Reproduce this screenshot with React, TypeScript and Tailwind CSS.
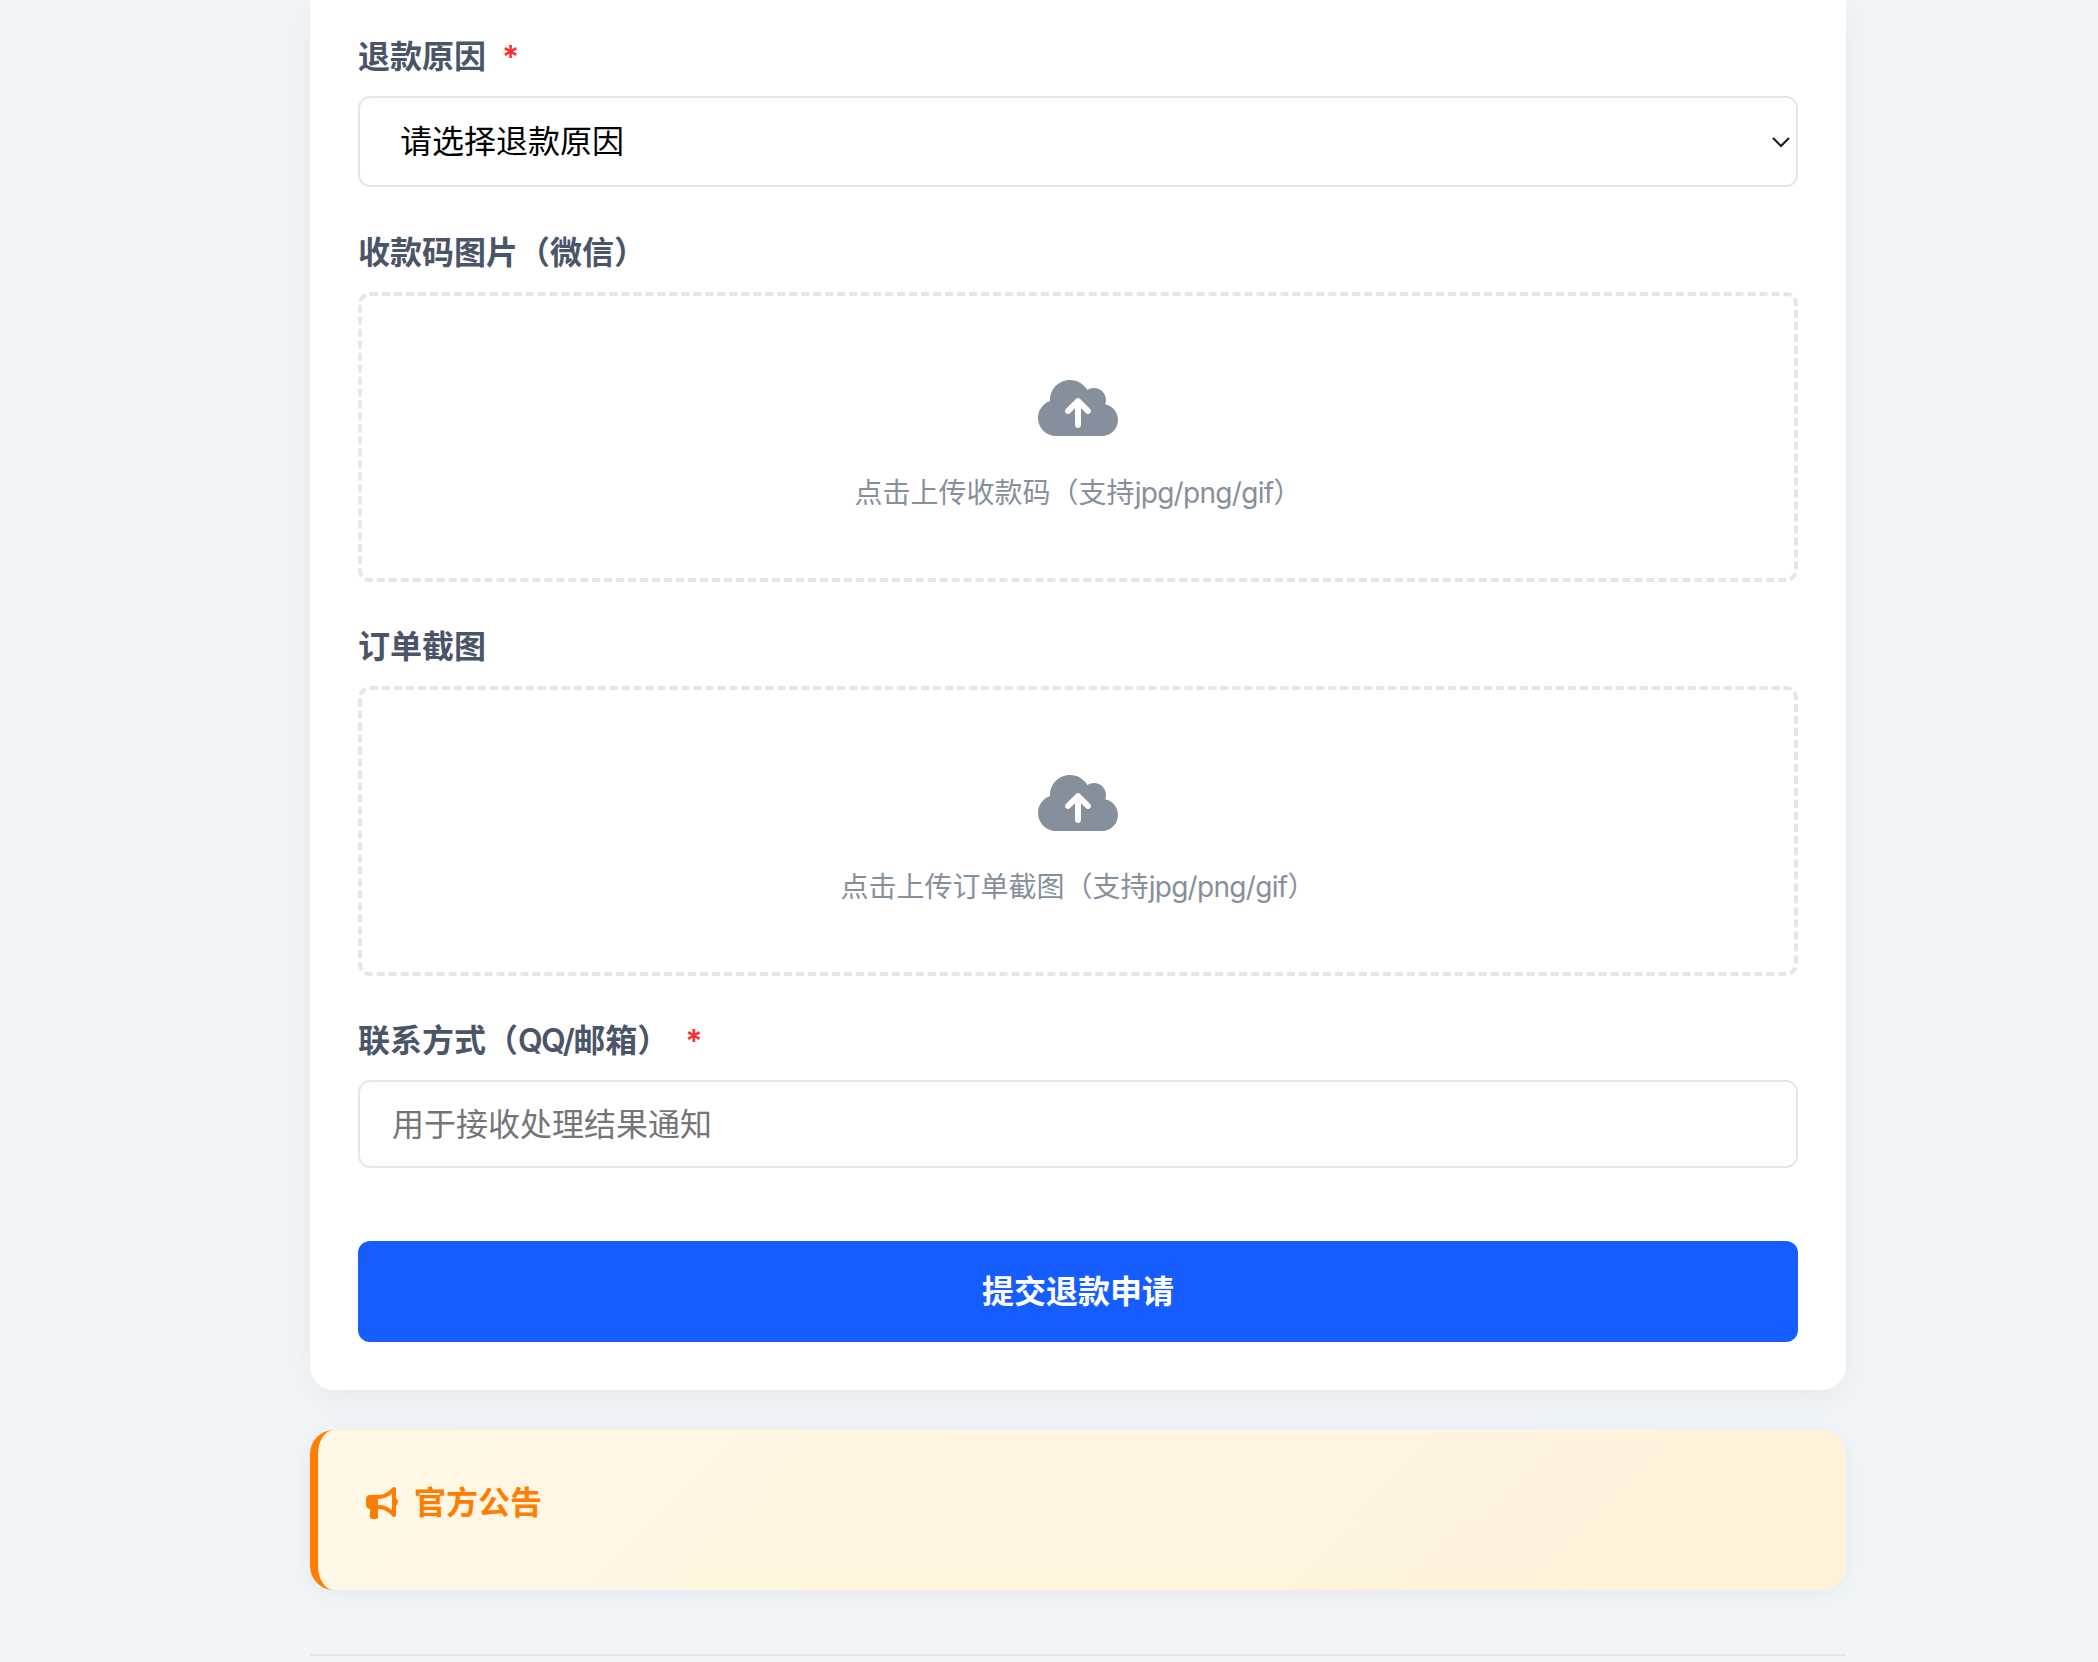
import type { ReactNode } from "react";
import { FaBullhorn, FaCloudArrowUp } from "react-icons/fa6";

const font = "font-['Inter','Noto_Sans_CJK_SC',sans-serif]";

function Label({ children, required, className }: { children: ReactNode; required?: boolean; className?: string }) {
  return (
    <label className={`flex h-[51px] items-center text-[32px] leading-[51px] font-semibold text-[#4a5568] ${className ?? ""}`}>
      <span>{children}</span>
      {required && <span className="ml-[16px] self-start mt-[5px] text-[32px] leading-[44px] font-semibold text-[#ff2d2d]">*</span>}
    </label>
  );
}

function Upload({ text, className }: { text: string; className?: string }) {
  return (
    <div className={`flex h-[290px] cursor-pointer flex-col items-center rounded-xl border-4 border-dashed border-[#e5e6eb] bg-white pt-[80.5px] ${className ?? ""}`}>
      <FaCloudArrowUp className="h-[64px] w-[80px] text-[#86909c]" />
      <p className="mt-[30.5px] text-[28px] leading-[45px] text-[#86909c]">
        {text}（支持<span className="tracking-[-0.7px]">jpg/png/gif</span>）
      </p>
    </div>
  );
}

export default function App() {
  return (
    <div className={`${font} h-[1662px] overflow-hidden bg-[#f2f5f8]`}>
      <div className="ml-[310px] flex w-[1536px] flex-col">
        <div className="rounded-b-3xl bg-white px-[48px] pt-[31px] pb-[48px] shadow-[0_8px_32px_rgba(0,0,0,0.05)]">
          <Label required>退款原因</Label>
          <div className="relative mt-[14px]">
            <select className="h-[91px] w-full appearance-none rounded-xl border-2 border-[#e5e6eb] bg-white pl-[40px] text-[32px] text-black outline-none">
              <option>请选择退款原因</option>
            </select>
            <svg className="pointer-events-none absolute top-[39px] right-[7px] h-[14px] w-[20px]" viewBox="0 0 20 14" fill="none" stroke="#1f1f1f" strokeWidth="2.2">
              <path d="M2 3l8 8 8-8" />
            </svg>
          </div>

          <Label className="mt-[40px]">收款码图片（微信）</Label>
          <Upload text="点击上传收款码" className="mt-[13.5px]" />

          <Label className="mt-[39.5px]">订单截图</Label>
          <Upload text="点击上传订单截图" className="mt-[14px]" />

          <Label required className="mt-[39px]">
            联系方式（<span className="tracking-[-1.7px]">QQ/</span>邮箱）
          </Label>
          <input
            className="mt-[14px] block h-[88px] w-full rounded-xl border-2 border-[#e5e6eb] bg-white px-[32px] text-[32px] outline-none placeholder:text-[#757575]"
            placeholder="用于接收处理结果通知"
          />

          <button className="mt-[73px] flex h-[101px] w-full items-center justify-center rounded-xl bg-[#165dff] text-[32px] font-semibold text-white">
            提交退款申请
          </button>
        </div>

        <div className="mt-[40px] h-[160px] rounded-3xl border-l-8 border-[#ff7d00] bg-[linear-gradient(135deg,#fff8e6,#fff2da)] pt-[49px] pl-[48px] shadow-[0_4px_24px_rgba(0,0,0,0.05)]">
          <div className="flex h-[48px] items-center gap-[16px] text-[32px] font-semibold text-[#ff7d00]">
            <FaBullhorn className="h-[32px] w-[32px]" />
            <span>官方公告</span>
          </div>
        </div>

        <footer className="mt-[64px] h-[40px] border-t-2 border-[#e2e5ea]" />
      </div>
    </div>
  );
}
